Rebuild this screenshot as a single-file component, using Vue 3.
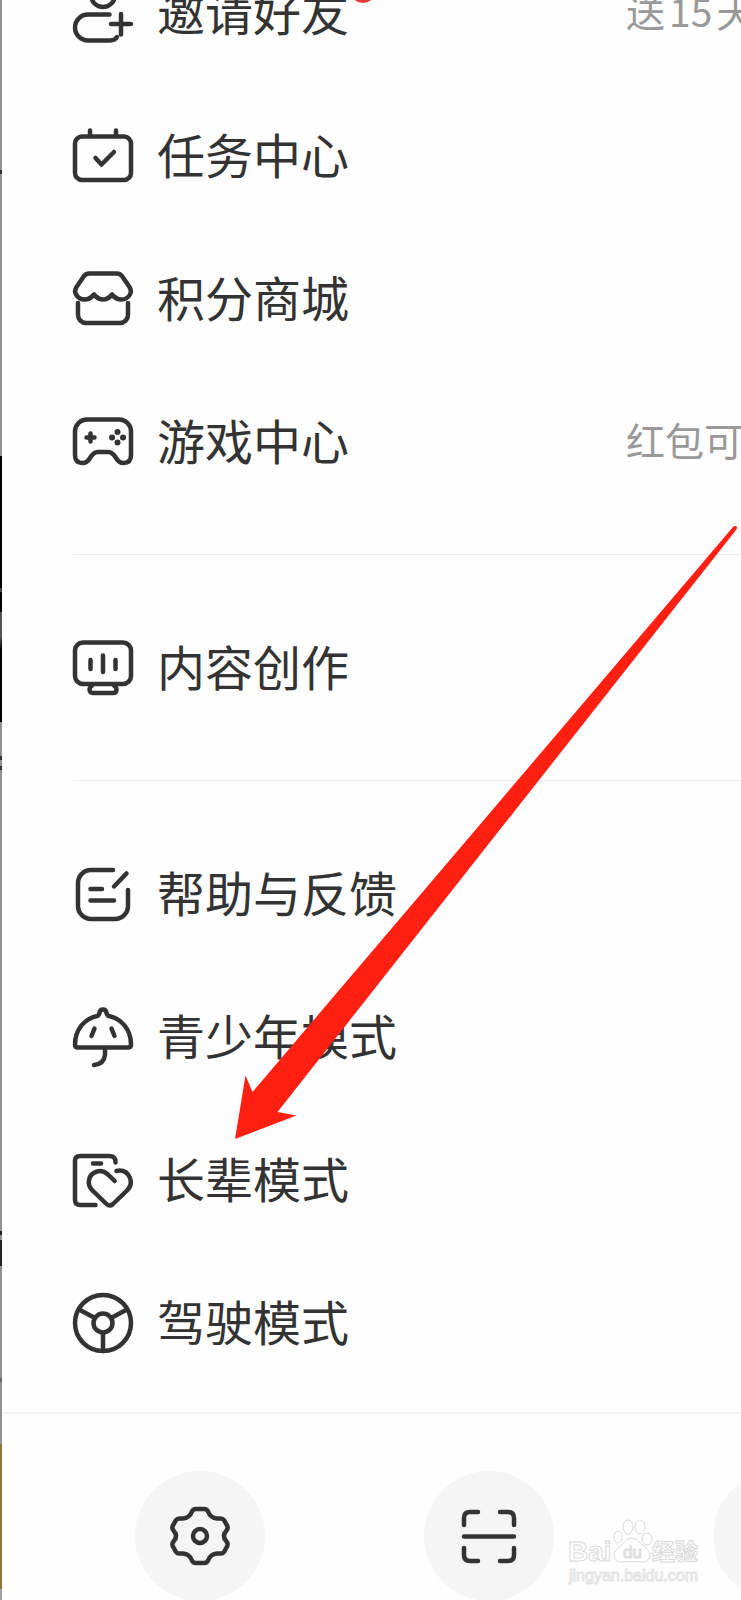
<script setup>
const groups = [
  [
    { icon: 'invite', label: '邀请好友', badge: true, hint: ['送', '15', '天'] },
    { icon: 'task', label: '任务中心' },
    { icon: 'store', label: '积分商城' },
    { icon: 'game', label: '游戏中心', hint: ['红包可'] },
  ],
  [{ icon: 'create', label: '内容创作' }],
  [
    { icon: 'feedback', label: '帮助与反馈' },
    { icon: 'teen', label: '青少年模式' },
    { icon: 'elder', label: '长辈模式' },
    { icon: 'drive', label: '驾驶模式' },
  ],
]

const icons = {
  invite: [
    'M36.5 31.5H15a13 13 0 0 0 0 26H37Q42 57.5 44 54',
    'M38 41H58M48 31V51.500',
    'M18 12a12 12 0 0 0 24 0a12 12 0 0 0-24 0',
  ],
  task: [
    'M9 10.500H51a7 7 0 0 1 7 7V47a7 7 0 0 1-7 7H9a7 7 0 0 1-7-7V17.500a7 7 0 0 1 7-7Z',
    'M17 4.500V10M43 4.500V10',
    'M22.500 32L28.500 38.500L41 26',
  ],
  store: [
    'M16 4.500H44Q47 4.500 49 7L56.500 18Q59 22 57 25.500Q54 30.500 48.500 30.500Q43 30.500 39 25.500Q35 30.500 30 30.500Q25 30.500 21 25.500Q17 30.500 11.500 30.500Q6 30.500 3 25.500Q1 22 3.500 18L11 7Q13 4.500 16 4.500Z',
    'M5 34V46a8 8 0 0 0 8 8H47a8 8 0 0 0 8-8V34',
  ],
  game: [
    'M14 7.500H46a12 12 0 0 1 12 12V43Q58 51 50.500 51Q46 51 43 46Q39.500 40 35 40H25Q20.500 40 17 46Q14 51 9.500 51Q2 51 2 43V19.500A12 12 0 0 1 14 7.500Z',
    'M13.500 25.500H21.500M17.500 21.500V29.500',
    'M44.500 20V20.100M44.500 30.500V30.600M39 25.500H39.100M50 25.500H50.100',
  ],
  create: [
    'M10 4.500H50a8 8 0 0 1 8 8V38a8 8 0 0 1-8 8H10a8 8 0 0 1-8-8V12.500a8 8 0 0 1 8-8Z',
    'M17.500 22V31M30 17.500V34M42.500 22V31',
    'M19 47.500Q16.500 49 16.500 52Q17 55 20 55H40Q43.500 55 43.500 52Q43.500 49 41 47.500',
  ],
  feedback: [
    'M40 6H18A13 13 0 0 0 5 19V42a13 13 0 0 0 13 13H42a13 13 0 0 0 13-13V26',
    'M41 22.500L53.500 9.500',
    'M17.500 25H29M17.500 36.500H41',
  ],
  teen: [
    'M5 40.500H55Q58 40.500 58 37.500C58 22 48 11.500 36 9Q34 8.500 33.500 6Q33 2.500 30 2.500Q27 2.500 26.500 6Q26 8.500 24 9C12 11.500 2 22 2 37.500Q2 40.500 5 40.500Z',
    'M21.500 21.500L18.500 29M38.500 21.500L41.500 29',
    'M32 41V48Q31 57 21 58',
  ],
  elder: [
    'M42.500 12.500Q43 6 36 6H7Q2 6 2 11V50Q2 55 7 55H22.500',
    'M20 13.500H28',
    'M41.700 31L35 24.500C31 21 27 20.500 24 21.500C15.500 24 13 34 19.500 40.500L33.500 54Q36.700 57 40 54L54 40.500C62 32.500 56 20.500 46.500 20.500Q45 20.500 43.500 21',
  ],
  drive: [
    'M2 30a28 28 0 0 0 56 0a28 28 0 0 0-56 0Z',
    'M20.500 30a9.500 9.500 0 0 0 19 0a9.500 9.500 0 0 0-19 0Z',
    'M7 17L21 24.500M53 17L39 24.500M30 40V58',
  ],
}
</script>

<template>
  <div class="screen">
    <div class="backdrop" aria-hidden="true"></div>
    <main class="drawer">
      <nav class="menu">
        <section v-for="(group, g) in groups" :key="g" class="group">
          <button v-for="item in group" :key="item.icon" type="button" class="row">
            <svg class="icon" :class="item.icon" viewBox="0 0 60 60" aria-hidden="true">
              <path v-for="d in icons[item.icon]" :key="d" :d="d" />
            </svg>
            <span class="label">{{ item.label }}<i v-if="item.badge" class="badge"></i></span>
            <span v-if="item.hint" class="hint">
              <span v-for="part in item.hint" :key="part">{{ part }}</span>
            </span>
          </button>
        </section>
      </nav>
      <footer class="tools">
        <button type="button" class="tool" aria-label="设置">
          <svg class="icon" viewBox="0 0 60 60" aria-hidden="true">
            <path d="M26 3H34Q37 3 38 5.500Q40.500 12 47 12.500H49.500Q52.500 12 54 14L57 19.500Q58.500 22 56.500 24.500Q51.500 30 56.500 35.500Q58.500 38 57 40.500L54 46Q52.500 48 49.500 47.500H47Q40.500 48 38 54.500Q37 57 34 57H26Q23 57 22 54.500Q19.500 48 13 47.500H10.500Q7.500 48 6 46L3 40.500Q1.500 38 3.500 35.500Q8.500 30 3.500 24.500Q1.500 22 3 19.500L6 14Q7.500 12 10.500 12.500H13Q19.500 12 22 5.500Q23 3 26 3Z" />
            <circle cx="30" cy="30" r="7" />
          </svg>
        </button>
        <button type="button" class="tool" aria-label="扫一扫">
          <svg class="icon" viewBox="0 0 60 60" aria-hidden="true">
            <path d="M5 19V12Q5 6 11 6H19M41 6H49Q55 6 55 12V19M5 42V49Q5 55 11 55H19M41 55H49Q55 55 55 49V42M5 30.500H55" />
          </svg>
        </button>
        <button type="button" class="tool" aria-label="更多"></button>
      </footer>
    </main>

    <svg class="arrow" viewBox="0 0 502 614" aria-hidden="true">
      <path d="M0 613L10.500 549.500L17.500 566L498 1Q500-1 502 1Q502 3 501 4L42.500 586L61.500 589.500Z" />
    </svg>

    <svg class="watermark" viewBox="0 0 136 72" role="img" aria-label="Baidu 经验">
      <g class="mark">
        <text x="2" y="45" class="bai">Bai</text>
        <ellipse cx="52" cy="21" rx="4" ry="6" />
        <ellipse cx="62" cy="11" rx="5" ry="7" />
        <ellipse cx="74" cy="11" rx="5" ry="7" />
        <ellipse cx="81" cy="23" rx="5" ry="6" />
        <path d="M66 22Q71 22 75 28Q84 33 84 40Q82 47 74 46Q66 45 58 46Q49 47 48 39Q48 34 56 29Q60 22 66 22Z" />
        <text x="57" y="42" class="du">du</text>
        <text x="86" y="44" class="jy">经验</text>
        <text x="3" y="65" class="site">jingyan.baidu.com</text>
      </g>
    </svg>
  </div>
</template>

<style>
body {
  margin: 0;
  background: #fefefe;
}
</style>

<style scoped>
.screen {
  position: relative;
  display: flex;
  height: 100vh;
  overflow: hidden;
  background: #fefefe;
  color: #333;
  font-family: "Noto Sans CJK SC", "Noto Sans", sans-serif;
}

.backdrop {
  flex: 0 0 2px;
  background: linear-gradient(
    #929292 0 170px, #333 170px 174px, #929292 174px 456px,
    #000 456px 588px, #444 588px 592px, #000 592px 612px, #555 612px 636px, #000 650px 722px,
    #929292 722px 756px, #333 756px 760px, #929292 760px 766px, #333 766px 770px,
    #929292 770px 1231px, #222 1231px 1235px, #929292 1235px 1240px, #222 1240px 1266px,
    #929292 1266px 1378px, #666 1378px 1382px, #929292 1382px 1444px,
    #8a7738 1444px 1589px, #a5a5a5 1589px
  );
}

.drawer {
  flex: 1;
  min-width: 0;
}

.menu {
  margin-top: -59px;
  padding: 0 0 18px 71px;
}

.group + .group {
  margin-top: 41px;
  padding-top: 41px;
  border-top: 1px solid #ececec;
}

.row {
  display: flex;
  align-items: center;
  gap: 24px;
  box-sizing: border-box;
  width: 100%;
  height: 143px;
  padding: 0;
  border: 0;
  background: none;
  color: inherit;
  font: inherit;
  text-align: left;
  white-space: nowrap;
}

.icon {
  flex: none;
  width: 60px;
  height: 60px;
  overflow: visible;
  fill: none;
  stroke: #333;
  stroke-width: 4.5;
  stroke-linecap: round;
  stroke-linejoin: round;
}

.game path:last-child {
  stroke-width: 6;
}

.label {
  position: relative;
  padding-bottom: 6px;
  font-size: 48px;
  line-height: 72px;
}

.badge {
  position: absolute;
  top: 3px;
  right: -27px;
  width: 26px;
  height: 26px;
  border-radius: 50%;
  background: #e13c32;
}

.hint {
  display: flex;
  flex: 0 0 115px;
  gap: 4px;
  min-width: 0;
  margin-left: auto;
  padding-bottom: 6px;
  color: #999;
  font-size: 39px;
  line-height: 58px;
}

.tools {
  display: flex;
  gap: 159px;
  padding: 57px 0 0 133px;
  border-top: 2px solid #f3f3f3;
}

.tool {
  display: flex;
  flex: none;
  align-items: center;
  justify-content: center;
  width: 130px;
  height: 130px;
  padding: 0;
  border: 0;
  border-radius: 50%;
  background: #f5f5f5;
}

.arrow {
  position: absolute;
  top: 526px;
  left: 235px;
  width: 502px;
  height: 614px;
  fill: #ff2012;
  pointer-events: none;
}

.watermark {
  position: absolute;
  right: 39px;
  bottom: 12px;
  width: 136px;
  height: 72px;
  pointer-events: none;
}

.mark {
  fill: #fff;
  stroke: #d9d9d9;
  stroke-width: 1;
  font-family: "Liberation Sans", "Noto Sans CJK SC", sans-serif;
}

.bai {
  font-size: 28px;
  font-weight: 700;
}

.du {
  font-size: 17px;
}

.jy {
  font-size: 23px;
  font-weight: 700;
}

.site {
  font-size: 16px;
  stroke: #e2e2e2;
}
</style>
